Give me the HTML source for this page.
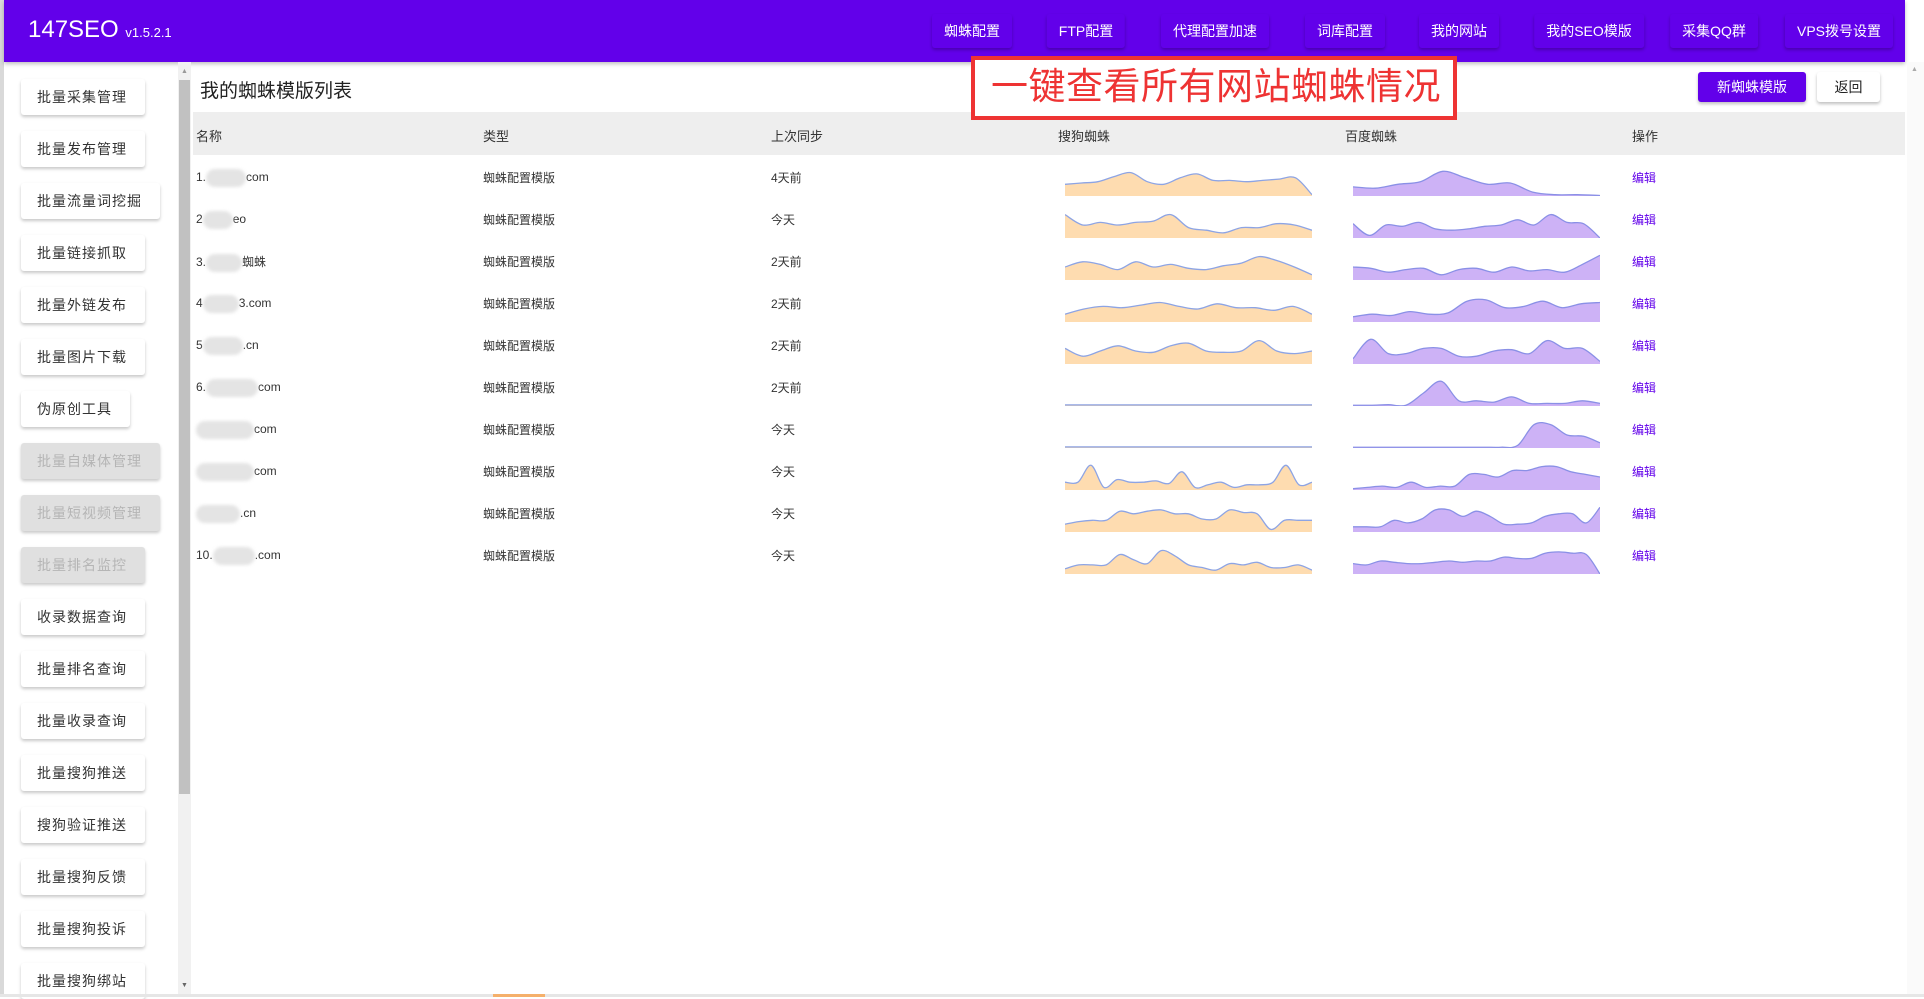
<!DOCTYPE html>
<html><head><meta charset="utf-8">
<style>
*{margin:0;padding:0;box-sizing:border-box}
body{width:1924px;height:997px;overflow:hidden;background:#fff;font-family:"Liberation Sans","Noto Sans CJK SC",sans-serif;position:relative;color:#222}
.lstrip{position:absolute;left:0;top:0;width:4px;height:997px;background:#d9d9d9}
.hdr{position:absolute;left:4px;top:0;width:1901px;height:62px;background:#6200ea;box-shadow:0 2px 4px rgba(0,0,0,.25)}
.logo{position:absolute;left:24px;top:16px;color:#fff;font-size:24px}
.logo small{font-size:13px}
.nav{position:absolute;top:14px;height:34px;line-height:34px;color:#fff;font-size:14px;padding:0 12px;transform:translateX(-50%);box-shadow:0 2px 3px rgba(0,0,0,.25);border-radius:3px;white-space:nowrap}
.sb{position:absolute;left:21px;height:36px;line-height:36px;background:#fff;box-shadow:0 2px 3px rgba(0,0,0,.22);border-radius:3px;font-size:14px;color:#333;padding-left:16px;letter-spacing:1px}
.sb.d{background:#e0e0e0;color:#b5b5b5}
.scr{position:absolute;left:178px;top:62px;width:13px;height:935px;background:#f1f1f1}
.thumb{position:absolute;left:179px;top:80px;width:11px;height:714px;background:#c1c1c1}
.rscr{position:absolute;left:1907px;top:62px;width:17px;height:935px;background:#fafafa}
.title{position:absolute;left:200px;top:76px;font-size:19px;color:#222}
.red{position:absolute;z-index:5;left:971px;top:56px;width:486px;height:64px;border:4px solid #ee3333;background:#fff;color:#ee3333;font-size:37px;line-height:54px;padding-left:16px;white-space:nowrap;overflow:hidden;letter-spacing:0.5px}
.btn{position:absolute;top:72px;height:30px;line-height:30px;font-size:14px;text-align:center;border-radius:3px;box-shadow:0 2px 3px rgba(0,0,0,.25)}
.th{position:absolute;left:193px;top:112px;width:1712px;height:43px;background:#eeeeee}
.hc{position:absolute;top:126px;font-size:13px;color:#333}
.c{position:absolute;font-size:12px;color:#333;white-space:nowrap}
.ed{color:#6200ea}
.blob{display:inline-block;background:#e4e4e4;border-radius:10px;height:18px;vertical-align:middle;filter:blur(1.5px)}
svg{position:absolute}
</style></head><body>
<div class="lstrip"></div>
<div class="hdr">
<div class="logo">147SEO <small>v1.5.2.1</small></div>
</div>
<div class="nav" style="left:972px">蜘蛛配置</div>
<div class="nav" style="left:1086px">FTP配置</div>
<div class="nav" style="left:1215px">代理配置加速</div>
<div class="nav" style="left:1345px">词库配置</div>
<div class="nav" style="left:1459px">我的网站</div>
<div class="nav" style="left:1589px">我的SEO模版</div>
<div class="nav" style="left:1714px">采集QQ群</div>
<div class="nav" style="left:1839px">VPS拨号设置</div>

<div id="side"></div>
<div class="scr"></div><div class="thumb"></div>
<div style="position:absolute;left:181px;top:68px;font-size:7px;color:#999">▲</div>
<div style="position:absolute;left:181px;top:982px;font-size:7px;color:#666">▼</div>
<div class="rscr"></div>
<div style="position:absolute;left:1911px;top:66px;font-size:7px;color:#aaa">▲</div>

<div class="title">我的蜘蛛模版列表</div>
<div class="red">一键查看所有网站蜘蛛情况</div>
<div class="btn" style="left:1698px;width:108px;background:#6200ea;color:#fff">新蜘蛛模版</div>
<div class="btn" style="left:1817px;width:63px;background:#fff;color:#222">返回</div>

<div class="th"></div>
<div class="hc" style="left:196px">名称</div>
<div class="hc" style="left:483px">类型</div>
<div class="hc" style="left:771px">上次同步</div>
<div class="hc" style="left:1058px">搜狗蜘蛛</div>
<div class="hc" style="left:1345px">百度蜘蛛</div>
<div class="hc" style="left:1632px">操作</div>
<div id="rows"></div>
<div style="position:absolute;left:0;top:994px;width:1924px;height:3px;background:#e6e6e6"></div>
<div style="position:absolute;left:493px;top:994px;width:52px;height:3px;background:#f5b06b"></div>

<script>
var side=[["批量采集管理",124],["批量发布管理",124],["批量流量词挖掘",139],["批量链接抓取",124],["批量外链发布",124],["批量图片下载",124],["伪原创工具",109],["批量自媒体管理",139,1],["批量短视频管理",139,1],["批量排名监控",124,1],["收录数据查询",124],["批量排名查询",124],["批量收录查询",124],["批量搜狗推送",124],["搜狗验证推送",124],["批量搜狗反馈",124],["批量搜狗投诉",124],["批量搜狗绑站",124]];
var h="";side.forEach(function(s,i){h+='<div class="sb'+(s[2]?' d':'')+'" style="top:'+(79+52*i)+'px;width:'+s[1]+'px">'+s[0]+'</div>';});
document.getElementById("side").innerHTML=h;
var names=[["1.",40,"com"],["2",30,"eo"],["3.",36,"蜘蛛"],["4",36,"3.com"],["5",40,".cn"],["6.",52,"com"],["",58,"com"],["",58,"com"],["",44,".cn"],["10.",42,".com"]];
var times=["4天前","今天","2天前","2天前","2天前","2天前","今天","今天","今天","今天"];
var S=[[.45,.5,.55,.75,.9,.55,.45,.7,.85,.6,.6,.55,.6,.65,.7,.05],[.9,.5,.6,.5,.6,.65,.9,.4,.3,.2,.4,.4,.55,.5,.3],[.5,.7,.6,.4,.7,.5,.6,.45,.4,.55,.65,.9,.75,.5,.2],[.3,.5,.6,.55,.65,.75,.6,.5,.7,.55,.55,.45,.6,.3],[.6,.3,.5,.7,.5,.45,.7,.8,.5,.45,.5,.9,.5,.4,.5],[.04,.04],[.04,.04],[.3,.3,.95,.1,.4,.3,.3,.35,.25,.7,.1,.2,.3,.1,.2,.2,.3,.95,.2,.3],[.3,.4,.45,.45,.8,.7,.8,.85,.7,.7,.5,.5,.85,.75,.7,.1,.45,.45,.45],[.2,.35,.35,.35,.75,.55,.4,.9,.7,.35,.25,.15,.4,.35,.45,.25,.25,.35,.15]];
var B=[[.35,.3,.45,.55,.95,.7,.45,.5,.15,.05,.05,.02],[.55,.1,.5,.45,.6,.35,.3,.35,.45,.5,.7,.5,.9,.6,.55,0],[.5,.45,.3,.4,.45,.2,.4,.45,.3,.5,.35,.4,.3,.6,.95],[.2,.3,.25,.4,.3,.35,.8,.85,.55,.6,.8,.55,.7,.75],[.2,.95,.4,.4,.6,.6,.3,.3,.5,.55,.4,.9,.6,.6,.1],[.03,.03,.05,.03,.5,.95,.2,.2,.15,.35,.1,.1,.1,.2,.1],[.03,.03,.03,.03,.03,.03,.03,.03,.03,.03,.1,.9,.9,.5,.45,.2],[.05,.1,.15,.1,.3,.1,.15,.15,.6,.6,.5,.75,.75,.9,.9,.7,.6,.5],[.2,.2,.2,.45,.35,.5,.85,.85,.6,.8,.6,.3,.3,.35,.6,.7,.7,.35,.95],[.4,.35,.5,.45,.4,.4,.45,.5,.45,.5,.5,.65,.6,.6,.8,.85,.8,.75,0]];
function path(v,W,H){var n=v.length,p=[];for(var i=0;i<n;i++)p.push([i*W/(n-1),H-v[i]*(H-2)]);
var d="M"+p[0][0]+","+p[0][1];for(var i=0;i<n-1;i++){var p0=p[i-1]||p[i],p1=p[i],p2=p[i+1],p3=p[i+2]||p2;
d+=" C"+(p1[0]+(p2[0]-p0[0])/6)+","+(p1[1]+(p2[1]-p0[1])/6)+" "+(p2[0]-(p3[0]-p1[0])/6)+","+(p2[1]-(p3[1]-p1[1])/6)+" "+p2[0]+","+p2[1];}
return d;}
function chart(x,y,v,fill,stroke){var W=247,H=28,d=path(v,W,H);
return '<svg style="left:'+x+'px;top:'+y+'px" width="'+W+'" height="'+H+'"><path d="'+d+' L'+W+','+H+' L0,'+H+' Z" fill="'+fill+'"/><path d="'+d+'" fill="none" stroke="'+stroke+'" stroke-width="1.3"/></svg>';}
var r="";for(var i=0;i<10;i++){var cy=177+42*i,n=names[i];
r+='<div class="c" style="left:196px;top:'+(cy-8)+'px">'+n[0]+'<span class="blob" style="width:'+n[1]+'px"></span>'+n[2]+'</div>';
r+='<div class="c" style="left:483px;top:'+(cy-8)+'px">蜘蛛配置模版</div>';
r+='<div class="c" style="left:771px;top:'+(cy-8)+'px">'+times[i]+'</div>';
r+='<div class="c ed" style="left:1632px;top:'+(cy-8)+'px">编辑</div>';
r+=chart(1065,cy-9,S[i],"#fedcb0","#8da4e4");
r+=chart(1353,cy-9,B[i],"#cdb2f6","#8a90e6");}
document.getElementById("rows").innerHTML=r;
</script>
</body></html>
